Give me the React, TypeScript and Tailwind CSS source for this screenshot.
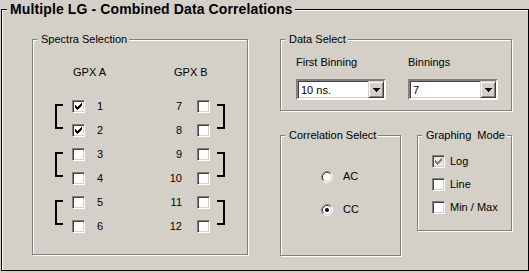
import React from 'react';

// classic 3D control helpers (Win2k palette)
const Check: React.FC<{ color?: string }> = ({ color = '#000' }) => (
  <svg width="11" height="11" viewBox="1 1 11 11" shapeRendering="crispEdges" className="block">
    <path
      fill={color}
      d="M3 5h1v3H3z M4 6h1v3H4z M5 7h1v3H5z M6 6h1v3H6z M7 5h1v3H7z M8 4h1v3H8z M9 3h1v3H9z"
    />
  </svg>
);

const CheckBox: React.FC<{ checked?: boolean; disabled?: boolean }> = ({ checked, disabled }) => (
  <div
    className={`w-[13px] h-[13px] shrink-0 border border-t-[#808080] border-l-[#808080] border-r-white border-b-white shadow-[inset_1px_1px_0_#404040,inset_-1px_-1px_0_#d4d0c8] ${
      disabled ? 'bg-[#e9e7e2]' : 'bg-white'
    }`}
  >
    {checked && <Check color={disabled ? '#808080' : '#000'} />}
  </div>
);

const Radio: React.FC<{ checked?: boolean }> = ({ checked }) => (
  <svg width="12" height="12" viewBox="0 0 12 12" className="block shrink-0">
    <circle cx="6" cy="6" r="5" fill="#fff" />
    <path d="M2.11 9.89A5.5 5.5 0 0 1 9.89 2.11" fill="none" stroke="#808080" strokeWidth="1" />
    <path d="M9.89 2.11A5.5 5.5 0 0 1 2.11 9.89" fill="none" stroke="#fff" strokeWidth="1" />
    <path d="M2.82 9.18A4.5 4.5 0 0 1 9.18 2.82" fill="none" stroke="#404040" strokeWidth="1" />
    <path d="M9.18 2.82A4.5 4.5 0 0 1 2.82 9.18" fill="none" stroke="#d4d0c8" strokeWidth="1" />
    {checked && <circle cx="6" cy="6" r="2" fill="#000" />}
  </svg>
);

const Combo: React.FC<{ value: string }> = ({ value }) => (
  <div className="w-[90px] h-[21px] flex items-center bg-white border-2 border-t-[#808080] border-l-[#808080] border-r-white border-b-white shadow-[inset_1px_1px_0_#404040,inset_-1px_-1px_0_#d4d0c8]">
    <span className="flex-1 pl-[3px] pt-[1px] leading-[13px]">{value}</span>
    <div className="w-[16px] h-[17px] flex items-center justify-center bg-[#d4d0c8] border border-t-[#d4d0c8] border-l-[#d4d0c8] border-r-[#404040] border-b-[#404040] shadow-[inset_1px_1px_0_#fff,inset_-1px_-1px_0_#808080]">
      <svg width="7" height="4" viewBox="0 0 7 4" shapeRendering="crispEdges" className="block">
        <path fill="#000" d="M0 0h7v1H0z M1 1h5v1H1z M2 2h3v1H2z M3 3h1v1H3z" />
      </svg>
    </div>
  </div>
);

const GroupBox: React.FC<{ title: string; className?: string; children?: React.ReactNode }> = ({
  title,
  className = '',
  children,
}) => (
  <div
    className={`relative border border-[#808080] shadow-[inset_1px_1px_0_#fff,1px_1px_0_#fff] ${className}`}
  >
    <span className="absolute -top-[7px] left-[4px] pl-[4px] pr-[2px] bg-[#d4d0c8] leading-[13px] whitespace-pre">
      {title}
    </span>
    {children}
  </div>
);

const Bracket: React.FC<{ side: 'left' | 'right' }> = ({ side }) => (
  <div
    className={`self-start mt-[10px] h-[25px] w-[8px] border-y-2 border-black ${
      side === 'left' ? 'border-l-2' : 'border-r-2'
    }`}
  />
);

const pairs = [
  [
    { a: '1', b: '7', checked: true },
    { a: '2', b: '8', checked: true },
  ],
  [
    { a: '3', b: '9' },
    { a: '4', b: '10' },
  ],
  [
    { a: '5', b: '11' },
    { a: '6', b: '12' },
  ],
];

function App() {
  return (
    <div className="w-[529px] h-[273px] bg-[#d4d0c8] pt-[9px] pl-[1px] text-[11px] text-black font-['Liberation_Sans',Arial,sans-serif] overflow-hidden">
      <div className="relative w-[528px] h-[262px] border border-black shadow-[inset_1px_1px_0_#fff] pl-[30px] pt-[29px] flex">
        <span className="absolute -top-[9px] left-[5px] pl-[3px] pr-[3px] bg-[#d4d0c8] text-[14px] leading-[16px] font-bold tracking-[0.12px]">
          Multiple LG - Combined Data Correlations
        </span>

        {/* spectra */}
        <GroupBox title="Spectra Selection" className="w-[216px] h-[216px] pt-[26px]">
          <div className="flex leading-[13px] pl-[40px]">
            <span className="w-[101px]">GPX A</span>
            <span>GPX B</span>
          </div>
          <div className="mt-[15px] flex flex-col">
            {pairs.map((pair, i) => (
              <div key={i} className="flex pl-[22px]">
                <Bracket side="left" />
                <div className="flex flex-col ml-[9px]">
                  {pair.map((row) => (
                    <div key={row.a} className="h-[24px] flex items-center">
                      <CheckBox checked={row.checked} />
                      <span className="ml-[12px] w-[20px]">{row.a}</span>
                      <span className="ml-[45px] w-[20px] text-right">{row.b}</span>
                      <div className="ml-[15px]">
                        <CheckBox />
                      </div>
                    </div>
                  ))}
                </div>
                <div className="ml-[7px] flex">
                  <Bracket side="right" />
                </div>
              </div>
            ))}
          </div>
        </GroupBox>

        {/* right column */}
        <div className="ml-[32px] w-[232px] flex flex-col gap-[24px]">
          <GroupBox title="Data Select" className="h-[72px] pt-[16px] pl-[15px]">
            <div className="flex gap-[22px]">
              <div className="flex flex-col gap-[10px]">
                <span className="leading-[13px]">First Binning</span>
                <Combo value="10 ns." />
              </div>
              <div className="flex flex-col gap-[10px]">
                <span className="leading-[13px]">Binnings</span>
                <Combo value="7" />
              </div>
            </div>
          </GroupBox>

          <div className="flex gap-[16px] items-start">
            <GroupBox title="Correlation Select" className="w-[121px] h-[121px] pt-[34px] pl-[40px]">
              <div className="flex flex-col gap-[20px]">
                <div className="flex items-center gap-[10px]">
                  <Radio />
                  <span className="leading-[13px]">AC</span>
                </div>
                <div className="flex items-center gap-[10px]">
                  <Radio checked />
                  <span className="leading-[13px]">CC</span>
                </div>
              </div>
            </GroupBox>

            <GroupBox title="Graphing  Mode" className="w-[95px] h-[96px] pt-[19px] pl-[14px]">
              <div className="flex flex-col gap-[10px]">
                <div className="flex items-center gap-[5px]">
                  <CheckBox checked disabled />
                  <span className="leading-[13px]">Log</span>
                </div>
                <div className="flex items-center gap-[5px]">
                  <CheckBox />
                  <span className="leading-[13px]">Line</span>
                </div>
                <div className="flex items-center gap-[5px]">
                  <CheckBox />
                  <span className="leading-[13px]">Min / Max</span>
                </div>
              </div>
            </GroupBox>
          </div>
        </div>
      </div>
    </div>
  );
}

export default App;
